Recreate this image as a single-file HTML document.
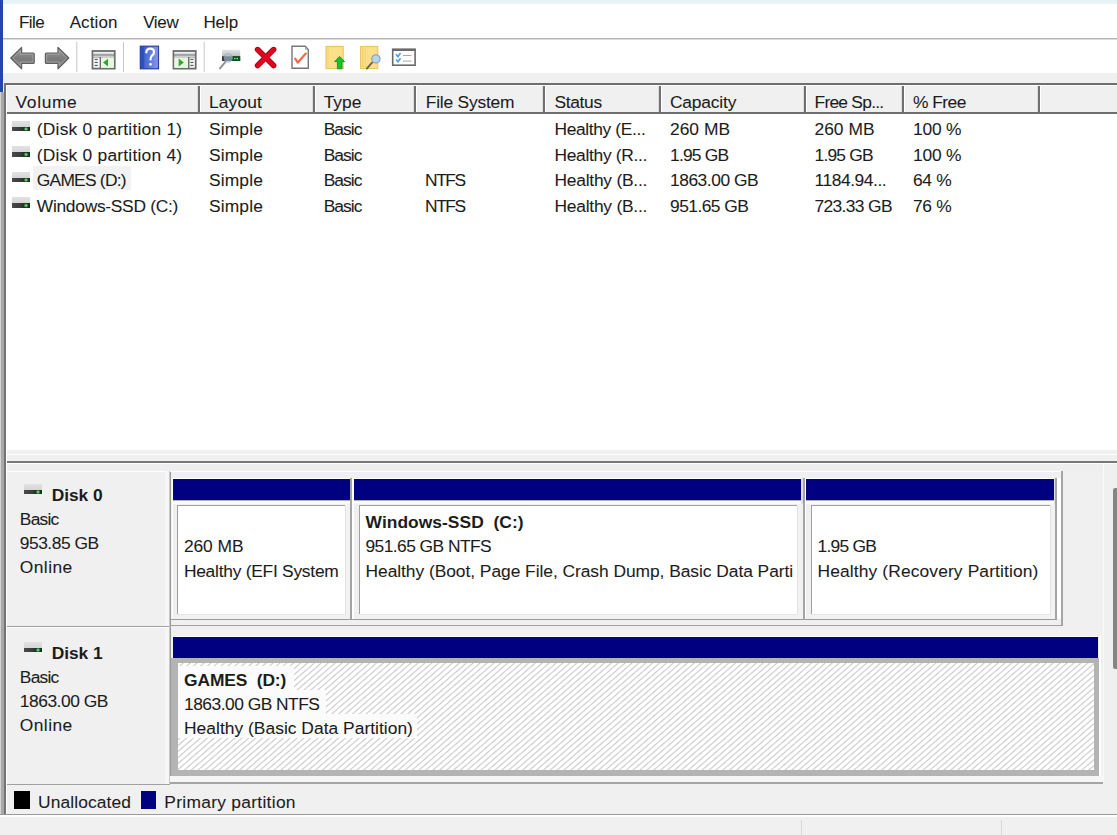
<!DOCTYPE html><html><head><meta charset="utf-8"><style>
*{margin:0;padding:0;box-sizing:border-box}
html,body{width:1117px;height:835px;overflow:hidden;background:#f0f0f0}
body{position:relative;font-family:"Liberation Sans",sans-serif}
.t{position:absolute;white-space:nowrap;line-height:20px;-webkit-text-stroke:0.08px #2a2a2a;}
.r{position:absolute}
.clip{position:absolute;overflow:hidden}
.dicon{position:absolute;width:18.2px;height:10.4px;background:linear-gradient(#e2e2e2,#cdcdcd);}
.dicon::after{content:"";position:absolute;left:0;right:0;bottom:0;height:4.4px;background:radial-gradient(circle at 78% 50%,#a8d8a8 0,#5aa060 1.2px,rgba(0,0,0,0) 2.2px),linear-gradient(90deg,#4a4a4a 0,#3c3c3c 45%,#1d3a22 62%,#0c3a12 100%);}
.hatch{position:absolute;background:repeating-linear-gradient(139deg,#ffffff 0px,#ffffff 2.3px,#cbcbcb 3.4px,#ffffff 4.53px);}
</style></head><body>
<div class="r" style="left:0px;top:0px;width:1117px;height:4px;background:#e7f3f4;"></div>
<div class="r" style="left:0px;top:4px;width:1117px;height:34px;background:#ffffff;"></div>
<div class="r" style="left:0px;top:38px;width:1117px;height:1px;background:#b6b6b6;"></div>
<div class="r" style="left:0px;top:39px;width:1117px;height:1px;background:#dadada;"></div>
<div class="r" style="left:0px;top:40px;width:1117px;height:33px;background:#ffffff;"></div>
<div class="r" style="left:0px;top:73px;width:1117px;height:10px;background:#f0f0f0;"></div>
<svg class="r" style="left:0;top:0" width="430" height="76" viewBox="0 0 430 76">
<defs>
<linearGradient id="ag" x1="0" y1="0" x2="0" y2="1"><stop offset="0" stop-color="#9c9c9c"/><stop offset="0.55" stop-color="#7a7a7a"/><stop offset="1" stop-color="#909090"/></linearGradient>
<linearGradient id="hb" x1="0" y1="0" x2="1" y2="0"><stop offset="0" stop-color="#2e56c8"/><stop offset="1" stop-color="#8a98f0"/></linearGradient>
<linearGradient id="dg" x1="0" y1="0" x2="0" y2="1"><stop offset="0" stop-color="#e4e4e4"/><stop offset="1" stop-color="#bdbdbd"/></linearGradient>
</defs>
<!-- back arrow -->
<path d="M10.8 58 L21.6 47.4 L21.6 53 L33.2 53 Q34.2 53 34.2 54 L34.2 62.4 Q34.2 63.4 33.2 63.4 L21.6 63.4 L21.6 68.8 Z" fill="url(#ag)" stroke="#5e5e5e" stroke-width="1.2" stroke-linejoin="round"/>
<path d="M13 58 L20.4 50.6 L20.4 54.2 L33 54.2 L33 62.2 L20.4 62.2 L20.4 65.6 Z" fill="none" stroke="#b8b8b8" stroke-width="0.7" stroke-linejoin="round" opacity="0.8"/>
<!-- forward arrow -->
<path d="M68.8 58 L58 47.4 L58 53 L46.4 53 Q45.4 53 45.4 54 L45.4 62.4 Q45.4 63.4 46.4 63.4 L58 63.4 L58 68.8 Z" fill="url(#ag)" stroke="#5e5e5e" stroke-width="1.2" stroke-linejoin="round"/>
<path d="M66.6 58 L59.2 50.6 L59.2 54.2 L46.6 54.2 L46.6 62.2 L59.2 62.2 L59.2 65.6 Z" fill="none" stroke="#b8b8b8" stroke-width="0.7" stroke-linejoin="round" opacity="0.8"/>
<rect x="76.3" y="42" width="1" height="30" fill="#c8c8c8"/>
<rect x="123" y="42" width="1" height="30" fill="#c8c8c8"/>
<rect x="203.7" y="42" width="1" height="30" fill="#c8c8c8"/>
<!-- console tree icon -->
<rect x="92.5" y="51" width="22.2" height="17.6" fill="#ffffff" stroke="#6c6c6c" stroke-width="1.8"/>
<rect x="93.4" y="52.6" width="20.4" height="1.6" fill="#d6dbe3"/>
<rect x="92.5" y="54.4" width="22.2" height="1.2" fill="#707070"/>
<rect x="92.5" y="56.6" width="22.2" height="1" fill="#8a8a8a"/>
<rect x="99.6" y="57" width="1.5" height="11" fill="#6c6c6c"/>
<rect x="101.1" y="57.6" width="12.7" height="10.2" fill="#e6f8de"/>
<path d="M103 62.5 L108 58.8 L108 66.6 Z" fill="#3aa03a"/>
<rect x="94.6" y="58.8" width="3.2" height="1.3" fill="#55606a"/>
<rect x="94.6" y="61.8" width="3.2" height="1.3" fill="#55606a"/>
<rect x="94.6" y="64.8" width="3.2" height="1.3" fill="#55606a"/>
<!-- help book -->
<rect x="140.3" y="46.2" width="18.2" height="22.6" fill="url(#hb)" stroke="#2b3f9e" stroke-width="1.2"/>
<rect x="140.9" y="46.8" width="3.2" height="21.4" fill="#2750c0"/>
<path d="M146.3 52.3 Q146.6 48.6 150.3 48.6 Q154 48.6 154 52 Q154 54.4 151.6 56 Q150.6 56.8 150.6 59.5" fill="none" stroke="#ffffff" stroke-width="2.2" stroke-linecap="round"/>
<circle cx="150.5" cy="64.3" r="1.4" fill="#ffffff"/>
<!-- action pane icon -->
<rect x="173.5" y="51" width="22.2" height="17.6" fill="#ffffff" stroke="#6c6c6c" stroke-width="1.8"/>
<rect x="174.4" y="52.6" width="20.4" height="1.6" fill="#d6dbe3"/>
<rect x="173.5" y="54.4" width="22.2" height="1.2" fill="#707070"/>
<rect x="173.5" y="56.6" width="22.2" height="1" fill="#8a8a8a"/>
<rect x="188" y="57" width="1.5" height="11" fill="#6c6c6c"/>
<rect x="174.4" y="57.6" width="13.6" height="10.2" fill="#e6f8de"/>
<path d="M183.8 62.5 L178.7 58.6 L178.7 66.6 Z" fill="#3aa03a"/>
<rect x="190.3" y="58.8" width="3.2" height="1.3" fill="#55606a"/>
<rect x="190.3" y="61.8" width="3.2" height="1.3" fill="#55606a"/>
<rect x="190.3" y="64.8" width="3.2" height="1.3" fill="#55606a"/>
<!-- drive magnifier -->
<rect x="222" y="49.8" width="18.2" height="6.4" fill="url(#dg)"/>
<rect x="222" y="56.2" width="18.2" height="4.8" fill="#2e3636"/>
<rect x="232.6" y="56.2" width="7.6" height="4.8" fill="#0f5020"/>
<rect x="234.2" y="57.9" width="1.4" height="1.3" fill="#7ef08a"/>
<rect x="236.6" y="57.9" width="1.4" height="1.3" fill="#7ef08a"/>
<circle cx="228.2" cy="58" r="4.2" fill="#a8c4dc" fill-opacity="0.6" stroke="#8aa0b4" stroke-width="0.6"/>
<path d="M225.4 61.8 L220 68.4" stroke="#909090" stroke-width="1.9" stroke-linecap="round"/>
<!-- red X -->
<path d="M257.6 49.6 L273.6 65.6 M273.6 49.6 L257.6 65.6" stroke="#9a0a14" stroke-width="5.6" stroke-linecap="round"/>
<path d="M257.6 49.6 L273.6 65.6 M273.6 49.6 L257.6 65.6" stroke="#e0061e" stroke-width="4" stroke-linecap="round"/>
<!-- doc with check -->
<path d="M292 46.3 L305.2 46.3 L308.3 49.6 L308.3 68.3 L292 68.3 Z" fill="#ffffff" stroke="#767676" stroke-width="1.4"/>
<path d="M305 46.5 L305 49.8 L308.2 49.8 Z" fill="#a0a8b0"/>
<path d="M295.2 58.6 L297.8 62.6 L305.8 53.6" fill="none" stroke="#e8704a" stroke-width="2.3" stroke-linecap="round" stroke-linejoin="round"/>
<!-- folder up -->
<rect x="326" y="46.4" width="17.2" height="22.2" fill="#fcdf88" stroke="#e6c25c" stroke-width="1"/>
<rect x="327.5" y="47.5" width="1.2" height="20" fill="#f6d070" opacity="0.6"/>
<path d="M339.6 56.4 L344.6 61.6 L342 61.6 L342 68.8 L337.4 68.8 L337.4 61.6 L334.6 61.6 Z" fill="#14c428" stroke="#0e8e18" stroke-width="0.8" stroke-linejoin="round"/>
<!-- folder magnifier -->
<rect x="360.6" y="46.4" width="17.2" height="22.2" fill="#fcdf88" stroke="#e6c25c" stroke-width="1"/>
<rect x="362.2" y="47.5" width="1.2" height="20" fill="#f0c860" opacity="0.7"/>
<rect x="365" y="47.5" width="1" height="20" fill="#f0c860" opacity="0.5"/>
<path d="M372.2 62.4 L366.8 68.6" stroke="#6c6448" stroke-width="1.8" stroke-linecap="round"/>
<circle cx="375.9" cy="58.9" r="4.1" fill="#b4d4ec" stroke="#8a9ab0" stroke-width="1.1"/>
<!-- checklist -->
<rect x="392.7" y="49.2" width="22.4" height="16" fill="#ffffff" stroke="#6a6a6a" stroke-width="1.6"/>
<rect x="392.7" y="49" width="22.4" height="2" fill="#6a6a6a"/>
<path d="M396 54.2 L398 56.6 L400.5 53" fill="none" stroke="#4aa0e0" stroke-width="1.6"/>
<path d="M396 59.4 L398 61.8 L400.5 58.2" fill="none" stroke="#4aa0e0" stroke-width="1.6"/>
<rect x="403" y="55" width="8.5" height="1" fill="#a8a8a8"/>
<rect x="403" y="60.6" width="8.5" height="1" fill="#a8a8a8"/>
</svg>
<div class="t" style="left:19.00px;top:13.21px;font-size:17px;color:#1c1c1c;letter-spacing:-0.523px;">File</div>
<div class="t" style="left:69.70px;top:13.21px;font-size:17px;color:#1c1c1c;letter-spacing:0.088px;">Action</div>
<div class="t" style="left:143.20px;top:13.21px;font-size:17px;color:#1c1c1c;letter-spacing:-0.350px;">View</div>
<div class="t" style="left:203.40px;top:13.21px;font-size:17px;color:#1c1c1c;letter-spacing:-0.045px;">Help</div>
<div class="r" style="left:4px;top:83px;width:1113px;height:2px;background:#6e6e6e;"></div>
<div class="r" style="left:6px;top:85px;width:1111px;height:27px;background:#f0f0f0;"></div>
<div class="r" style="left:6px;top:85px;width:1111px;height:1px;background:#ffffff;"></div>
<div class="r" style="left:6px;top:112px;width:1111px;height:2px;background:#6e6e6e;"></div>
<div class="r" style="left:196.5px;top:86px;width:1px;height:26px;background:#dcdcdc;"></div>
<div class="r" style="left:197.5px;top:86px;width:2px;height:26px;background:#707070;"></div>
<div class="r" style="left:199.5px;top:86px;width:1px;height:26px;background:#ffffff;"></div>
<div class="r" style="left:311.5px;top:86px;width:1px;height:26px;background:#dcdcdc;"></div>
<div class="r" style="left:312.5px;top:86px;width:2px;height:26px;background:#707070;"></div>
<div class="r" style="left:314.5px;top:86px;width:1px;height:26px;background:#ffffff;"></div>
<div class="r" style="left:413px;top:86px;width:1px;height:26px;background:#dcdcdc;"></div>
<div class="r" style="left:414px;top:86px;width:2px;height:26px;background:#707070;"></div>
<div class="r" style="left:416px;top:86px;width:1px;height:26px;background:#ffffff;"></div>
<div class="r" style="left:542px;top:86px;width:1px;height:26px;background:#dcdcdc;"></div>
<div class="r" style="left:543px;top:86px;width:2px;height:26px;background:#707070;"></div>
<div class="r" style="left:545px;top:86px;width:1px;height:26px;background:#ffffff;"></div>
<div class="r" style="left:657.5px;top:86px;width:1px;height:26px;background:#dcdcdc;"></div>
<div class="r" style="left:658.5px;top:86px;width:2px;height:26px;background:#707070;"></div>
<div class="r" style="left:660.5px;top:86px;width:1px;height:26px;background:#ffffff;"></div>
<div class="r" style="left:802.5px;top:86px;width:1px;height:26px;background:#dcdcdc;"></div>
<div class="r" style="left:803.5px;top:86px;width:2px;height:26px;background:#707070;"></div>
<div class="r" style="left:805.5px;top:86px;width:1px;height:26px;background:#ffffff;"></div>
<div class="r" style="left:901px;top:86px;width:1px;height:26px;background:#dcdcdc;"></div>
<div class="r" style="left:902px;top:86px;width:2px;height:26px;background:#707070;"></div>
<div class="r" style="left:904px;top:86px;width:1px;height:26px;background:#ffffff;"></div>
<div class="r" style="left:1036.5px;top:86px;width:1px;height:26px;background:#dcdcdc;"></div>
<div class="r" style="left:1037.5px;top:86px;width:2px;height:26px;background:#707070;"></div>
<div class="r" style="left:1039.5px;top:86px;width:1px;height:26px;background:#ffffff;"></div>
<div class="t" style="left:15.60px;top:91.77px;font-size:17.4px;color:#1c1c1c;letter-spacing:0.634px;">Volume</div>
<div class="t" style="left:208.90px;top:91.77px;font-size:17.4px;color:#1c1c1c;letter-spacing:0.163px;">Layout</div>
<div class="t" style="left:323.70px;top:91.77px;font-size:17.4px;color:#1c1c1c;letter-spacing:0.014px;">Type</div>
<div class="t" style="left:425.80px;top:91.77px;font-size:17.4px;color:#1c1c1c;letter-spacing:-0.212px;">File System</div>
<div class="t" style="left:554.50px;top:91.77px;font-size:17.4px;color:#1c1c1c;letter-spacing:-0.346px;">Status</div>
<div class="t" style="left:670.00px;top:91.77px;font-size:17.4px;color:#1c1c1c;letter-spacing:-0.184px;">Capacity</div>
<div class="t" style="left:814.50px;top:91.77px;font-size:17.4px;color:#1c1c1c;letter-spacing:-0.743px;">Free Sp...</div>
<div class="t" style="left:912.90px;top:91.77px;font-size:17.4px;color:#1c1c1c;letter-spacing:-0.503px;">% Free</div>
<div class="r" style="left:6px;top:114px;width:1111px;height:336px;background:#ffffff;"></div>
<div class="dicon" style="left:12px;top:120.8px"></div>
<div class="t" style="left:36.80px;top:119.47px;font-size:17.4px;color:#1c1c1c;letter-spacing:0.221px;">(Disk 0 partition 1)</div>
<div class="t" style="left:208.90px;top:119.47px;font-size:17.4px;color:#1c1c1c;letter-spacing:0.169px;">Simple</div>
<div class="t" style="left:323.70px;top:119.47px;font-size:17.4px;color:#1c1c1c;letter-spacing:-0.936px;">Basic</div>
<div class="t" style="left:554.50px;top:119.47px;font-size:17.4px;color:#1c1c1c;letter-spacing:-0.367px;">Healthy (E...</div>
<div class="t" style="left:670.00px;top:119.47px;font-size:17.4px;color:#1c1c1c;letter-spacing:0.011px;">260 MB</div>
<div class="t" style="left:814.50px;top:119.47px;font-size:17.4px;color:#1c1c1c;letter-spacing:0.011px;">260 MB</div>
<div class="t" style="left:912.90px;top:119.47px;font-size:17.4px;color:#1c1c1c;letter-spacing:-0.157px;">100 %</div>
<div class="dicon" style="left:12px;top:146.3px"></div>
<div class="t" style="left:36.80px;top:144.97px;font-size:17.4px;color:#1c1c1c;letter-spacing:0.221px;">(Disk 0 partition 4)</div>
<div class="t" style="left:208.90px;top:144.97px;font-size:17.4px;color:#1c1c1c;letter-spacing:0.169px;">Simple</div>
<div class="t" style="left:323.70px;top:144.97px;font-size:17.4px;color:#1c1c1c;letter-spacing:-0.936px;">Basic</div>
<div class="t" style="left:554.50px;top:144.97px;font-size:17.4px;color:#1c1c1c;letter-spacing:-0.313px;">Healthy (R...</div>
<div class="t" style="left:670.00px;top:144.97px;font-size:17.4px;color:#1c1c1c;letter-spacing:-0.793px;">1.95 GB</div>
<div class="t" style="left:814.50px;top:144.97px;font-size:17.4px;color:#1c1c1c;letter-spacing:-0.793px;">1.95 GB</div>
<div class="t" style="left:912.90px;top:144.97px;font-size:17.4px;color:#1c1c1c;letter-spacing:-0.157px;">100 %</div>
<div class="r" style="left:33px;top:166px;width:97.5px;height:24.3px;background:#f2f2f2;"></div>
<div class="dicon" style="left:12px;top:171.8px"></div>
<div class="t" style="left:36.80px;top:170.47px;font-size:17.4px;color:#1c1c1c;letter-spacing:-0.762px;">GAMES (D:)</div>
<div class="t" style="left:208.90px;top:170.47px;font-size:17.4px;color:#1c1c1c;letter-spacing:0.169px;">Simple</div>
<div class="t" style="left:323.70px;top:170.47px;font-size:17.4px;color:#1c1c1c;letter-spacing:-0.936px;">Basic</div>
<div class="t" style="left:425.10px;top:170.47px;font-size:17.4px;color:#1c1c1c;letter-spacing:-1.471px;">NTFS</div>
<div class="t" style="left:554.50px;top:170.47px;font-size:17.4px;color:#1c1c1c;letter-spacing:-0.233px;">Healthy (B...</div>
<div class="t" style="left:670.00px;top:170.47px;font-size:17.4px;color:#1c1c1c;letter-spacing:-0.468px;">1863.00 GB</div>
<div class="t" style="left:814.50px;top:170.47px;font-size:17.4px;color:#1c1c1c;letter-spacing:-0.436px;">1184.94...</div>
<div class="t" style="left:912.90px;top:170.47px;font-size:17.4px;color:#1c1c1c;letter-spacing:-0.291px;">64 %</div>
<div class="dicon" style="left:12px;top:197.3px"></div>
<div class="t" style="left:36.80px;top:195.97px;font-size:17.4px;color:#1c1c1c;letter-spacing:-0.292px;">Windows-SSD (C:)</div>
<div class="t" style="left:208.90px;top:195.97px;font-size:17.4px;color:#1c1c1c;letter-spacing:0.169px;">Simple</div>
<div class="t" style="left:323.70px;top:195.97px;font-size:17.4px;color:#1c1c1c;letter-spacing:-0.936px;">Basic</div>
<div class="t" style="left:425.10px;top:195.97px;font-size:17.4px;color:#1c1c1c;letter-spacing:-1.471px;">NTFS</div>
<div class="t" style="left:554.50px;top:195.97px;font-size:17.4px;color:#1c1c1c;letter-spacing:-0.233px;">Healthy (B...</div>
<div class="t" style="left:670.00px;top:195.97px;font-size:17.4px;color:#1c1c1c;letter-spacing:-0.534px;">951.65 GB</div>
<div class="t" style="left:814.50px;top:195.97px;font-size:17.4px;color:#1c1c1c;letter-spacing:-0.634px;">723.33 GB</div>
<div class="t" style="left:912.90px;top:195.97px;font-size:17.4px;color:#1c1c1c;letter-spacing:-0.291px;">76 %</div>
<div class="r" style="left:6px;top:450px;width:1111px;height:11px;background:#f0f0f0;"></div>
<div class="r" style="left:6px;top:454px;width:1111px;height:1px;background:#ffffff;"></div>
<div class="r" style="left:4px;top:461px;width:1113px;height:2px;background:#777777;"></div>
<div class="r" style="left:6px;top:463px;width:1111px;height:1px;background:#ffffff;"></div>
<div class="r" style="left:6px;top:464px;width:1097px;height:7px;background:#eeeeee;"></div>
<div class="r" style="left:6px;top:471px;width:164px;height:1px;background:#ffffff;"></div>
<div class="dicon" style="left:24px;top:483.9px"></div>
<div class="t" style="left:51.70px;top:485.37px;font-size:17.4px;font-weight:bold;-webkit-text-stroke:0;color:#1c1c1c;letter-spacing:-0.049px;">Disk 0</div>
<div class="t" style="left:19.80px;top:509.37px;font-size:17.4px;color:#1c1c1c;letter-spacing:-0.761px;">Basic</div>
<div class="t" style="left:19.80px;top:533.22px;font-size:17.4px;color:#1c1c1c;letter-spacing:-0.484px;">953.85 GB</div>
<div class="t" style="left:19.80px;top:557.07px;font-size:17.4px;color:#1c1c1c;letter-spacing:0.423px;">Online</div>
<div class="r" style="left:6px;top:627px;width:164px;height:1px;background:#ffffff;"></div>
<div class="dicon" style="left:24px;top:641.8px"></div>
<div class="t" style="left:51.70px;top:643.27px;font-size:17.4px;font-weight:bold;-webkit-text-stroke:0;color:#1c1c1c;letter-spacing:-0.049px;">Disk 1</div>
<div class="t" style="left:19.80px;top:667.27px;font-size:17.4px;color:#1c1c1c;letter-spacing:-0.761px;">Basic</div>
<div class="t" style="left:19.80px;top:691.12px;font-size:17.4px;color:#1c1c1c;letter-spacing:-0.468px;">1863.00 GB</div>
<div class="t" style="left:19.80px;top:714.97px;font-size:17.4px;color:#1c1c1c;letter-spacing:0.423px;">Online</div>
<div class="r" style="left:165px;top:471px;width:4px;height:313px;background:#f6f6f6;"></div>
<div class="r" style="left:169px;top:471px;width:1px;height:313px;background:#c8c8c8;"></div>
<div class="r" style="left:170px;top:471px;width:1px;height:313px;background:#9a9a9a;"></div>
<div class="r" style="left:6px;top:626px;width:163px;height:1px;background:#a0a0a0;"></div>
<div class="r" style="left:6px;top:627px;width:163px;height:1px;background:#ffffff;"></div>
<div class="r" style="left:6px;top:784px;width:164px;height:1px;background:#a0a0a0;"></div>
<div class="r" style="left:170px;top:471px;width:892px;height:1px;background:#ffffff;"></div>
<div class="r" style="left:1061px;top:471px;width:2px;height:155px;background:#a6a6a6;"></div>
<div class="r" style="left:170px;top:625px;width:893px;height:1px;background:#a0a0a0;"></div>
<div class="r" style="left:172px;top:478px;width:1px;height:141px;background:#ffffff;"></div>
<div class="r" style="left:173px;top:478px;width:177px;height:1px;background:#ffffff;"></div>
<div class="r" style="left:173px;top:479px;width:177px;height:21px;background:#000080;"></div>
<div class="r" style="left:173px;top:500px;width:177px;height:1px;background:#b0b0b0;"></div>
<div class="r" style="left:173px;top:501px;width:177px;height:3px;background:#fafafa;"></div>
<div class="r" style="left:350px;top:478px;width:2px;height:141px;background:#a4a4a4;"></div>
<div class="r" style="left:352px;top:478px;width:2px;height:141px;background:#ffffff;"></div>
<div class="r" style="left:177px;top:505px;width:168px;height:109px;background:#ffffff;"></div>
<div class="r" style="left:177px;top:505px;width:168px;height:1px;background:#a0a0a0;"></div>
<div class="r" style="left:177px;top:505px;width:1px;height:109px;background:#a0a0a0;"></div>
<div class="r" style="left:178px;top:614px;width:172px;height:5px;background:#f2f2f2;"></div>
<div class="r" style="left:345px;top:504px;width:5px;height:115px;background:#f2f2f2;"></div>
<div class="r" style="left:345px;top:506px;width:1px;height:109px;background:#e2e2e2;"></div>
<div class="r" style="left:178px;top:614px;width:168px;height:1px;background:#e6e6e6;"></div>
<div class="clip" style="left:178px;top:506px;width:164px;height:106px"><div class="t" style="left:5.90px;top:30.37px;font-size:17.4px;color:#1c1c1c;letter-spacing:-0.069px;">260 MB</div>
<div class="t" style="left:5.90px;top:54.77px;font-size:17.4px;color:#1c1c1c;letter-spacing:-0.253px;">Healthy (EFI System Partition)</div>
</div>
<div class="r" style="left:354px;top:478px;width:447px;height:1px;background:#ffffff;"></div>
<div class="r" style="left:354px;top:479px;width:447px;height:21px;background:#000080;"></div>
<div class="r" style="left:354px;top:500px;width:447px;height:1px;background:#b0b0b0;"></div>
<div class="r" style="left:354px;top:501px;width:447px;height:3px;background:#fafafa;"></div>
<div class="r" style="left:801px;top:478px;width:2px;height:141px;background:#dedede;"></div>
<div class="r" style="left:803px;top:478px;width:2px;height:141px;background:#a4a4a4;"></div>
<div class="r" style="left:805px;top:478px;width:1px;height:141px;background:#ffffff;"></div>
<div class="r" style="left:359px;top:505px;width:438px;height:109px;background:#ffffff;"></div>
<div class="r" style="left:359px;top:505px;width:438px;height:1px;background:#a0a0a0;"></div>
<div class="r" style="left:359px;top:505px;width:1px;height:109px;background:#a0a0a0;"></div>
<div class="r" style="left:360px;top:614px;width:443px;height:5px;background:#f2f2f2;"></div>
<div class="r" style="left:797px;top:504px;width:6px;height:115px;background:#f2f2f2;"></div>
<div class="r" style="left:797px;top:506px;width:1px;height:109px;background:#e2e2e2;"></div>
<div class="r" style="left:360px;top:614px;width:438px;height:1px;background:#e6e6e6;"></div>
<div class="clip" style="left:360px;top:506px;width:433px;height:106px"><div class="t" style="left:5.60px;top:6.47px;font-size:17.4px;font-weight:bold;-webkit-text-stroke:0;color:#1c1c1c;letter-spacing:0.039px;">Windows-SSD&nbsp;&nbsp;(C:)</div>
<div class="t" style="left:5.50px;top:30.37px;font-size:17.4px;color:#1c1c1c;letter-spacing:-0.558px;">951.65 GB NTFS</div>
<div class="t" style="left:5.50px;top:54.77px;font-size:17.4px;color:#1c1c1c;letter-spacing:-0.046px;">Healthy (Boot, Page File, Crash Dump, Basic Data Partition)</div>
</div>
<div class="r" style="left:806px;top:478px;width:248px;height:1px;background:#ffffff;"></div>
<div class="r" style="left:806px;top:479px;width:248px;height:21px;background:#000080;"></div>
<div class="r" style="left:806px;top:500px;width:248px;height:1px;background:#b0b0b0;"></div>
<div class="r" style="left:806px;top:501px;width:248px;height:3px;background:#fafafa;"></div>
<div class="r" style="left:1054px;top:478px;width:1px;height:141px;background:#dedede;"></div>
<div class="r" style="left:1055px;top:478px;width:2px;height:141px;background:#a4a4a4;"></div>
<div class="r" style="left:1057px;top:478px;width:4px;height:141px;background:#ffffff;"></div>
<div class="r" style="left:811px;top:505px;width:239px;height:109px;background:#ffffff;"></div>
<div class="r" style="left:811px;top:505px;width:239px;height:1px;background:#a0a0a0;"></div>
<div class="r" style="left:811px;top:505px;width:1px;height:109px;background:#a0a0a0;"></div>
<div class="r" style="left:812px;top:614px;width:243px;height:5px;background:#f2f2f2;"></div>
<div class="r" style="left:1050px;top:504px;width:5px;height:115px;background:#f2f2f2;"></div>
<div class="r" style="left:1050px;top:506px;width:1px;height:109px;background:#e2e2e2;"></div>
<div class="r" style="left:812px;top:614px;width:239px;height:1px;background:#e6e6e6;"></div>
<div class="clip" style="left:812px;top:506px;width:238px;height:106px"><div class="t" style="left:5.50px;top:30.37px;font-size:17.4px;color:#1c1c1c;letter-spacing:-0.760px;">1.95 GB</div>
<div class="t" style="left:5.50px;top:54.77px;font-size:17.4px;color:#1c1c1c;letter-spacing:0.126px;">Healthy (Recovery Partition)</div>
</div>
<div class="r" style="left:170px;top:619px;width:887px;height:1px;background:#9c9c9c;"></div>
<div class="r" style="left:172px;top:636px;width:927px;height:1px;background:#ffffff;"></div>
<div class="r" style="left:173px;top:637px;width:925px;height:21px;background:#000080;"></div>
<div class="r" style="left:171px;top:658px;width:928px;height:118px;background:#b4b4b4;"></div>
<div class="r" style="left:1099px;top:636px;width:2px;height:141px;background:#ffffff;"></div>
<div class="hatch" style="left:177.5px;top:663px;width:916px;height:107px"></div>
<div class="r" style="left:178px;top:666px;width:116px;height:24px;background:#fbfbfb;"></div>
<div class="r" style="left:178px;top:690px;width:148px;height:24px;background:#fbfbfb;"></div>
<div class="r" style="left:178px;top:714px;width:239px;height:24px;background:#fbfbfb;"></div>
<div class="t" style="left:184.00px;top:670.37px;font-size:17.4px;font-weight:bold;-webkit-text-stroke:0;color:#1c1c1c;letter-spacing:-0.104px;">GAMES&nbsp;&nbsp;(D:)</div>
<div class="t" style="left:184.00px;top:694.37px;font-size:17.4px;color:#1c1c1c;letter-spacing:-0.508px;">1863.00 GB NTFS</div>
<div class="t" style="left:184.00px;top:718.07px;font-size:17.4px;color:#1c1c1c;letter-spacing:0.028px;">Healthy (Basic Data Partition)</div>
<div class="r" style="left:170px;top:776px;width:933px;height:6px;background:#f6f6f6;"></div>
<div class="r" style="left:170px;top:782px;width:933px;height:2px;background:#a4a4a4;"></div>
<div class="r" style="left:1103px;top:463px;width:1px;height:320px;background:#f9f9f9;"></div>
<div class="r" style="left:1113px;top:488px;width:4px;height:181px;background:#858585;border-radius:2px 0 0 2px;"></div>
<div class="r" style="left:14.4px;top:790.5px;width:15.6px;height:18.5px;background:#000000;"></div>
<div class="t" style="left:38.00px;top:791.57px;font-size:17.4px;color:#1c1c1c;letter-spacing:0.113px;">Unallocated</div>
<div class="r" style="left:141px;top:790.5px;width:15px;height:18.5px;background:#000080;"></div>
<div class="t" style="left:164.30px;top:791.57px;font-size:17.4px;color:#1c1c1c;letter-spacing:0.289px;">Primary partition</div>
<div class="r" style="left:0px;top:814px;width:1117px;height:1px;background:#9a9a9a;"></div>
<div class="r" style="left:0px;top:815px;width:1117px;height:2px;background:#ffffff;"></div>
<div class="r" style="left:801px;top:820px;width:1px;height:15px;background:#d8d8d8;"></div>
<div class="r" style="left:1001px;top:820px;width:1px;height:15px;background:#d8d8d8;"></div>
<div class="r" style="left:0px;top:0px;width:3px;height:92px;background:#2148a8;"></div>
<div class="r" style="left:0px;top:92px;width:1px;height:722px;background:#d4d4d4;"></div>
<div class="r" style="left:1px;top:92px;width:3px;height:722px;background:#a8a8a8;"></div>
<div class="r" style="left:4px;top:83px;width:2px;height:731px;background:#737373;"></div>
<div class="r" style="left:6px;top:85px;width:1px;height:729px;background:#ffffff;"></div>
</body></html>
